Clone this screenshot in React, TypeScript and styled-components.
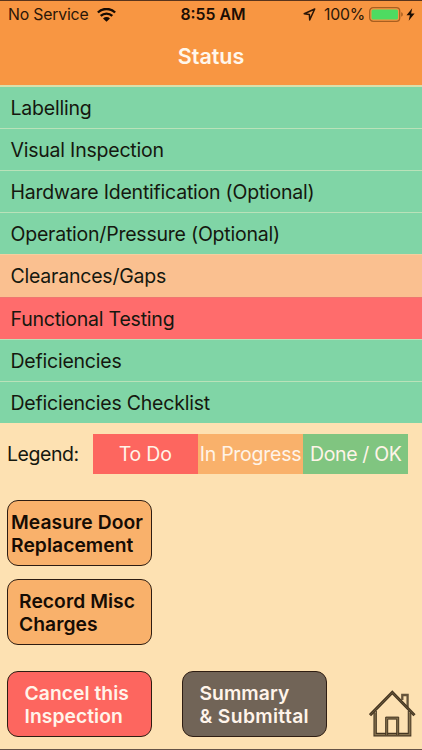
import React from "react";
import styled, { createGlobalStyle } from "styled-components";

const GlobalStyle = createGlobalStyle`
  * { box-sizing: border-box; }
  body { margin: 0; background: #fde1b2; }
`;

const Screen = styled.main`
  width: 422px;
  height: 750px;
  display: flex;
  flex-direction: column;
  overflow: hidden;
  background: #fde1b2;
  border-top: 1px solid #59341c;
  border-bottom: 1px solid #665347;
  font-family: Inter, "Liberation Sans", sans-serif;
  color: #15180f;
`;

const Header = styled.header`
  height: 84px;
  flex: none;
  background: #f89642;
`;

const StatusBar = styled.div`
  height: 27px;
  display: grid;
  grid-template-columns: 1fr auto 1fr;
  align-items: center;
  padding: 0 6px 0 8px;
  font-size: 15.8px;
  color: #2a1608;
`;

const Carrier = styled.div`
  display: flex;
  align-items: center;
  gap: 8px;
  letter-spacing: -0.18px;
`;

const Clock = styled.div`
  padding-left: 2px;
  font-weight: 600;
  color: #1c0e04;
`;

const Power = styled.div`
  display: flex;
  align-items: center;
  justify-content: flex-end;
`;

const Percent = styled.span`
  margin: 0 4px 0 8px;
  letter-spacing: -0.2px;
`;

const Title = styled.h1`
  margin: 14px 0 0;
  text-align: center;
  color: #fff7ec;
  font-size: 21.5px;
  line-height: 28px;
  font-weight: 600;
`;

const List = styled.ul`
  height: 338px;
  flex: none;
  margin: 0;
  padding: 0;
  list-style: none;
  display: grid;
  grid-template-rows: 43px repeat(7, 1fr);
`;

const tones = {
  done: { fill: "#80d5a6", line: "#b9e2b9" },
  progress: { fill: "#fac090", line: "#f4cf9f" },
  todo: { fill: "#ff6c6c", line: "#ee7670" },
};

type Tone = keyof typeof tones;

const Row = styled.li<{ $tone: Tone }>`
  display: flex;
  align-items: center;
  padding: 1px 0 0 10.5px;
  border-top: 1px solid ${(p) => tones[p.$tone].line};
  background: ${(p) => tones[p.$tone].fill};
  font-size: 19.5px;
  letter-spacing: -0.22px;
  white-space: nowrap;

  &:first-child {
    border-top: 2px solid #d9dfac;
    padding-top: 0;
  }
`;

const Legend = styled.section`
  display: flex;
  align-items: center;
  height: 40px;
  margin: 11px 0 0 7px;
  font-size: 19.5px;
`;

const LegendLabel = styled.span`
  width: 85.5px;
  letter-spacing: -0.45px;
`;

const Swatch = styled.span<{ $color: string; $spacing?: number }>`
  width: 105.3px;
  height: 40px;
  display: flex;
  align-items: center;
  justify-content: center;
  background: ${(p) => p.$color};
  color: #fff4e8;
  letter-spacing: ${(p) => p.$spacing ?? 0}px;
  white-space: nowrap;
`;

const Actions = styled.section`
  display: flex;
  flex-direction: column;
  gap: 13px;
  margin: 26px 0 0 6.5px;
`;

const ActionButton = styled.button<{ $fill: string; $inset: number; $light?: boolean }>`
  width: 145.5px;
  height: 66px;
  padding: 2px 0 0 ${(p) => p.$inset}px;
  border: 1px solid #2e1d12;
  border-radius: 11px;
  background: ${(p) => p.$fill};
  color: ${(p) => (p.$light ? "#fff4ea" : "#160c04")};
  font: 600 19.3px/23.3px Inter, "Liberation Sans", sans-serif;
  letter-spacing: 0.05px;
  text-align: left;
  white-space: nowrap;
`;

const Footer = styled.footer`
  display: flex;
  align-items: flex-start;
  margin: 26px 0 0 6.5px;
`;

const Submit = styled.div`
  margin: 0 42px 0 29.5px;
`;

const WideLine = styled.span`
  letter-spacing: 0.35px;
`;

const HomeButton = styled.button`
  margin-top: 18px;
  padding: 0;
  border: 0;
  background: none;
  line-height: 0;
`;

const WifiIcon = () => (
  <svg width="19" height="14" viewBox="0 0 19 14" aria-hidden="true">
    <path d="M.9 4.5C5.7-.2 13.3-.2 18.1 4.5M3.7 7.9c3.3-3.1 8.3-3.1 11.6 0" fill="none" stroke="#160b03" strokeWidth="2.4" />
    <path d="M6 10.4c2-1.8 5-1.8 7 0l-3.5 3.4z" fill="#160b03" />
  </svg>
);

const LocationIcon = () => (
  <svg width="13" height="13" viewBox="0 0 13 13" aria-hidden="true">
    <path d="M11.7 1 1.2 5.7l5.2.9.3 5.3z" fill="none" stroke="#2a1608" strokeWidth="1.5" strokeLinejoin="round" />
  </svg>
);

const BatteryIcon = () => (
  <svg width="35" height="15" viewBox="0 0 35 15" aria-hidden="true">
    <rect x=".7" y=".7" width="30" height="13.6" rx="3.4" fill="none" stroke="#a95f20" strokeWidth="1.3" />
    <rect x="2.5" y="2.5" width="26.5" height="10" rx="1.5" fill="#4edb61" />
    <path d="M32.2 5.3c2.2.4 2.2 4 0 4.4z" fill="#a95f20" />
  </svg>
);

const BoltIcon = () => (
  <svg width="12" height="13" viewBox="-2 0 12 13" aria-hidden="true">
    <path d="M6.2.3.5 7.2h3.4L2.7 12.7 8.6 5.6H5.1z" fill="#1c0e04" />
  </svg>
);

const HouseIcon = () => (
  <svg width="48" height="49" viewBox="0 0 48 49" fill="none" aria-hidden="true">
    <path d="M6.1 23.4v22.4h34.5V23.4" stroke="#86724f" strokeWidth="2" />
    <path d="M5 23v23.9h36.8V23M7.3 22v22.4h32V22" stroke="#443521" strokeWidth="1.1" />
    <path d="M33.3 11V6h5.3v12" stroke="#66543b" strokeWidth="2.3" />
    <path d="M1 26.2 23.3 3.5l22.2 22.7" stroke="#443521" strokeWidth="3" />
    <path d="M1.3 25.9 23.3 3.5l21.9 22.4" stroke="#86724f" strokeWidth=".6" />
    <path d="M17.7 46V29h11V46" stroke="#86724f" strokeWidth="2" />
    <path d="M16.7 46V28.1h13V46M18.7 46V30.1h9V46" stroke="#443521" strokeWidth="1" />
  </svg>
);

const rows: { label: string; tone: Tone }[] = [
  { label: "Labelling", tone: "done" },
  { label: "Visual Inspection", tone: "done" },
  { label: "Hardware Identification (Optional)", tone: "done" },
  { label: "Operation/Pressure (Optional)", tone: "done" },
  { label: "Clearances/Gaps", tone: "progress" },
  { label: "Functional Testing", tone: "todo" },
  { label: "Deficiencies", tone: "done" },
  { label: "Deficiencies Checklist", tone: "done" },
];

export default function App() {
  return (
    <>
      <GlobalStyle />
      <Screen>
        <Header>
          <StatusBar>
            <Carrier>No Service <WifiIcon /></Carrier>
            <Clock>8:55 AM</Clock>
            <Power>
              <LocationIcon />
              <Percent>100%</Percent>
              <BatteryIcon />
              <BoltIcon />
            </Power>
          </StatusBar>
          <Title>Status</Title>
        </Header>
        <List>
          {rows.map((r) => (
            <Row key={r.label} $tone={r.tone}>{r.label}</Row>
          ))}
        </List>
        <Legend>
          <LegendLabel>Legend:</LegendLabel>
          <Swatch $color="#fd665f" $spacing={-0.2}>To Do</Swatch>
          <Swatch $color="#f9b16b" $spacing={-0.25}>In Progress</Swatch>
          <Swatch $color="#80c580" $spacing={-0.35}>Done / OK</Swatch>
        </Legend>
        <Actions>
          <ActionButton $fill="#f9b16b" $inset={3.5}>Measure Door<br />Replacement</ActionButton>
          <ActionButton $fill="#f9b16b" $inset={11.5}>Record Misc<br />Charges</ActionButton>
        </Actions>
        <Footer>
          <ActionButton $fill="#fd665f" $inset={17} $light>Cancel this<br />Inspection</ActionButton>
          <Submit>
            <ActionButton $fill="#716457" $inset={17} $light>
              Summary<br /><WideLine>&amp; Submittal</WideLine>
            </ActionButton>
          </Submit>
          <HomeButton aria-label="Home"><HouseIcon /></HomeButton>
        </Footer>
      </Screen>
    </>
  );
}
